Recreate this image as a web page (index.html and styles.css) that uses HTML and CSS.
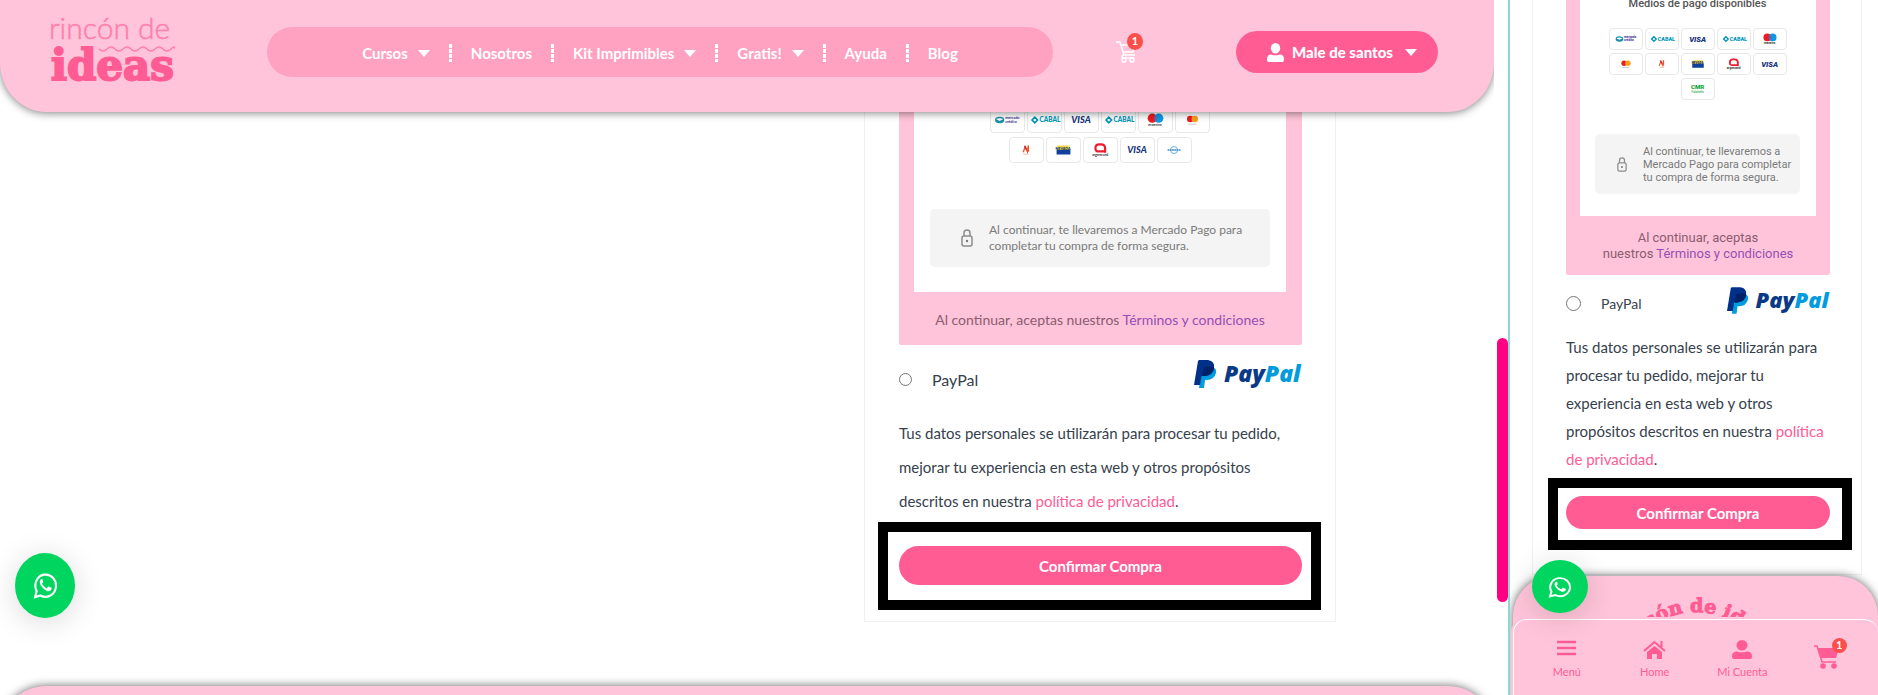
FILE: index.html
```html
<!DOCTYPE html>
<html lang="es">
<head>
    <meta charset="UTF-8">
    <meta name="viewport" content="width=device-width, initial-scale=1.0">
    <title>Rincón de Ideas - Finalizar compra</title>
    <link rel="stylesheet" href="styles.css">
</head>
<body>
    <!-- shared icons -->
    <svg class="sprite" aria-hidden="true">
        <symbol id="mercado" viewBox="0 0 35 26">
            <ellipse cx="9" cy="13" rx="5" ry="3.500" fill="#1a8fa8"/>
            <path d="M5 12q4-2 8 0l-4 2z" fill="#fff"/>
            <text x="15" y="12" class="tiny" fill="#3b2a91">mercado</text>
            <text x="15" y="16" class="tiny" fill="#3b2a91">crédito</text>
        </symbol>
        <symbol id="cabal" viewBox="0 0 35 26">
            <path d="M4 13l3-3 3 3-3 3z" fill="none" stroke="#0097b8" stroke-width="1.800"/>
            <text x="12" y="15.500" font-size="7" font-weight="900" fill="#0097b8">CABAL</text>
        </symbol>
        <symbol id="visa" viewBox="0 0 35 26">
            <text x="17" y="16.500" font-size="10" font-weight="900" font-style="italic" text-anchor="middle" fill="#17337c">VISA</text>
        </symbol>
        <symbol id="maestro" viewBox="0 0 35 26">
            <circle cx="14" cy="11" r="5" fill="#eb1c22"/>
            <circle cx="21" cy="11" r="5" fill="#0d9ae5"/>
            <path d="M17.500 7.500a5 5 0 0 1 0 7a5 5 0 0 1 0-7" fill="#7b5aa5"/>
            <text x="17" y="20" class="tiny" text-anchor="middle" fill="#333">maestro</text>
        </symbol>
        <symbol id="master" viewBox="0 0 35 26">
            <circle cx="15" cy="12" r="3.500" fill="#eb1c22"/>
            <circle cx="20" cy="12" r="3.500" fill="#f99f1b"/>
            <path d="M13 17.500h9" stroke="#999" stroke-width=".6"/>
        </symbol>
        <symbol id="naranja" viewBox="0 0 35 26">
            <path d="M14 15.500l2-6 2.500 5.500 1-7v7" fill="none" stroke="#f2542d" stroke-width="1.500"/>
            <path d="M15.500 8.500l2 4" stroke="#d2222d" stroke-width="1.500"/>
            <path d="M14 17.500h6" stroke="#f7a38d" stroke-width=".8"/>
        </symbol>
        <symbol id="nevada" viewBox="0 0 35 26">
            <path d="M11 8h13v5H10z" fill="#f5d742"/>
            <path d="M10 13h15v5H10z" fill="#10409b"/>
            <text x="17" y="13.500" font-size="4" font-weight="900" text-anchor="middle" fill="#10306e">NEVADA</text>
        </symbol>
        <symbol id="argen" viewBox="0 0 35 26">
            <path d="M22.500 16v-5q0-4-4.500-4h-2q-4 0-4 4t4 3.500h6.500" fill="none" stroke="#ee1c2e" stroke-width="2.400"/>
            <text x="17" y="20" class="tiny" text-anchor="middle" fill="#333">argencard</text>
        </symbol>
        <symbol id="diners" viewBox="0 0 35 26">
            <circle cx="17" cy="13" r="3.800" fill="none" stroke="#5aa6d6"/>
            <path d="M10 13h14" stroke="#3c8ec9" stroke-width="1.800" stroke-dasharray="2 .4"/>
        </symbol>
        <symbol id="cmr" viewBox="0 0 35 26">
            <text x="17" y="13.500" font-size="8" font-weight="900" text-anchor="middle" fill="#13a538">CMR</text>
            <text x="17" y="18" font-size="4" text-anchor="middle" fill="#13a538">Falabella</text>
        </symbol>
        <symbol id="lock" viewBox="0 0 12 18">
            <rect x="1" y="7" width="10" height="10" rx="2" fill="none" stroke="#8c8c8c" stroke-width="1.500"/>
            <path d="M3 7V4a3 3 0 0 1 6 0v3" fill="none" stroke="#8c8c8c" stroke-width="1.500"/>
            <circle cx="6" cy="12" r="1.200" fill="#777"/>
        </symbol>
        <symbol id="user" viewBox="0 0 20 20">
            <ellipse cx="10" cy="5.500" rx="5.500" ry="5.500"/>
            <path d="M0 18v-1q0-5 5-5 5 2 10 0 5 0 5 5v1q0 2-2 2H2q-2 0-2-2z"/>
        </symbol>
        <symbol id="whatsapp" viewBox="0 0 24 24">
            <path d="M2 22.300l1.500-5.300A9.900 9.900 0 1 1 7.300 20.800z" fill="none" stroke="#fff" stroke-width="2"/>
            <path d="M8.600 6.300q-.8-.2-1.500.8-1.500 2.400.8 5.400 2.300 3.400 6 4.600 3 .6 3.900-2 .2-.9-.2-1.100l-2.300-1.100q-.5-.2-.8.2l-1 1.200q-.3.300-.7.100-2.700-1.200-4-3.700-.1-.3.100-.6l.8-1q.2-.3 0-.6L9.200 6.700q-.2-.4-.6-.4z" fill="#fff"/>
        </symbol>
        <symbol id="paypal" viewBox="0 0 108 28">
            <path d="M19 7q4 2 3 6-2 7-9 7h-2l-1 8H5l3-20z" fill="#009cde"/>
            <path d="M5 0h9q7 1 6 8-1 7-9 8H7.500L6 25H0L4 1z" fill="#003087"/>
            <path d="M10 7q8-1 10 0 0 8-9 9H8z" fill="#012169"/>
            <text x="30" y="22" class="paypal-text" fill="#0a3a86">Pay<tspan fill="#009cde">Pal</tspan></text>
        </symbol>
    </svg>

    <div class="panes">
        <section class="desktop">
            <header class="header">
                <a href="#" class="logo" aria-label="Rincón de ideas">
                    <svg width="126" height="84" viewBox="0 0 126 84">
                        <text x="0" y="29" class="logo-thin">rincón de</text>
                        <text x="2" y="70" class="logo-fat">ideas</text>
                        <path d="M50 39q4 4 8 0t8 0 8 0 8 0 8 0 8 0 8 0 8 0 8 0 4 0" fill="none" stroke="#ff7fab" stroke-width="1.500"/>
                    </svg>
                </a>
                <nav class="nav">
                    <a href="#" class="has-caret">Cursos</a>
                    <a href="#">Nosotros</a>
                    <a href="#" class="has-caret">Kit Imprimibles</a>
                    <a href="#" class="has-caret">Gratis!</a>
                    <a href="#">Ayuda</a>
                    <a href="#">Blog</a>
                </nav>
                <a href="#" class="cart" aria-label="Carrito">
                    <svg width="20" height="22" viewBox="0 0 20 22" fill="none" stroke="#fff" stroke-width="1.500">
                        <path d="M0 1h4l4 13h11M5 4h14l-2 7H7M8 14q-2 0-2 2 0 1 1 1h11"/>
                        <circle cx="8" cy="19" r="2"/>
                        <circle cx="16" cy="19" r="2"/>
                    </svg>
                    <span class="badge">1</span>
                </a>
                <button type="button" class="account">
                    <svg width="17" height="19" viewBox="0 0 20 20" preserveAspectRatio="none" fill="#fff"><use href="#user"/></svg>
                    <span class="has-caret">Male de santos</span>
                </button>
            </header>

            <main class="main">
                <div class="card">
                    <div class="pay-box">
                        <div class="pay-inner">
                            <div class="chips">
                                <svg class="chip"><use href="#mercado"/></svg>
                                <svg class="chip"><use href="#cabal"/></svg>
                                <svg class="chip"><use href="#visa"/></svg>
                                <svg class="chip"><use href="#cabal"/></svg>
                                <svg class="chip"><use href="#maestro"/></svg>
                                <svg class="chip"><use href="#master"/></svg>
                                <svg class="chip"><use href="#naranja"/></svg>
                                <svg class="chip"><use href="#nevada"/></svg>
                                <svg class="chip"><use href="#argen"/></svg>
                                <svg class="chip"><use href="#visa"/></svg>
                                <svg class="chip"><use href="#diners"/></svg>
                            </div>
                            <div class="notice">
                                <svg class="lock"><use href="#lock"/></svg>
                                <p>Al continuar, te llevaremos a Mercado Pago para<br>completar tu compra de forma segura.</p>
                            </div>
                        </div>
                        <p class="terms">Al continuar, aceptas nuestros <a href="#">Términos y condiciones</a></p>
                    </div>
                    <div class="paypal-row">
                        <input type="radio" id="paypalDesktop" name="payDesktop">
                        <label for="paypalDesktop">PayPal</label>
                        <svg class="paypal-logo"><use href="#paypal"/></svg>
                    </div>
                    <p class="privacy">Tus datos personales se utilizarán para procesar tu pedido, mejorar tu experiencia en esta web y otros propósitos descritos en nuestra <a href="#">política de privacidad</a>.</p>
                    <div class="frame">
                        <button type="submit" class="confirm">Confirmar Compra</button>
                    </div>
                </div>
            </main>
            <footer class="footer"></footer>
            <a href="#" class="whatsapp" aria-label="WhatsApp">
                <svg width="25" height="27" viewBox="0 0 24 24" preserveAspectRatio="none"><use href="#whatsapp"/></svg>
            </a>
        </section>

        <div class="scroll"><div class="thumb"></div></div>

        <section class="phone">
            <div class="card">
                <div class="pay-box">
                    <div class="pay-inner">
                        <h3>Medios de pago disponibles</h3>
                        <div class="chips">
                            <svg class="chip"><use href="#mercado"/></svg>
                            <svg class="chip"><use href="#cabal"/></svg>
                            <svg class="chip"><use href="#visa"/></svg>
                            <svg class="chip"><use href="#cabal"/></svg>
                            <svg class="chip"><use href="#maestro"/></svg>
                            <svg class="chip"><use href="#master"/></svg>
                            <svg class="chip"><use href="#naranja"/></svg>
                            <svg class="chip"><use href="#nevada"/></svg>
                            <svg class="chip"><use href="#argen"/></svg>
                            <svg class="chip"><use href="#visa"/></svg>
                            <svg class="chip"><use href="#cmr"/></svg>
                        </div>
                        <div class="notice">
                            <svg class="lock"><use href="#lock"/></svg>
                            <p>Al continuar, te llevaremos a Mercado Pago para completar tu compra de forma segura.</p>
                        </div>
                    </div>
                    <p class="terms">Al continuar, aceptas<br>nuestros <a href="#">Términos y condiciones</a></p>
                </div>
                <div class="paypal-row">
                    <input type="radio" id="paypalPhone" name="payPhone">
                    <label for="paypalPhone">PayPal</label>
                    <svg class="paypal-logo"><use href="#paypal"/></svg>
                </div>
                <p class="privacy">Tus datos personales se utilizarán para procesar tu pedido, mejorar tu experiencia en esta web y otros propósitos descritos en nuestra <a href="#">política de privacidad</a>.</p>
                <div class="frame">
                    <button type="submit" class="confirm">Confirmar Compra</button>
                </div>
            </div>
            <footer class="footer">
                <svg width="160" height="100" viewBox="0 0 160 100">
                    <path id="arc" d="M5 94A75 75 0 0 1 155 94" fill="none"/>
                    <text class="arc-text" text-anchor="middle"><textPath href="#arc" startOffset="50%">rincón de ideas</textPath></text>
                </svg>
            </footer>
            <nav class="tabs">
                <a href="#">
                    <svg width="19" height="19" viewBox="0 0 19 19" stroke="#ff5c94" stroke-width="2.500"><path d="M0 2h19M0 8h19M0 14h19"/></svg>
                    Menú
                </a>
                <a href="#">
                    <svg width="23" height="19" viewBox="0 0 23 19" fill="#ff5c94">
                        <path d="M11.500 6l7.500 6v7h-5v-5H9v5H4v-7z"/>
                        <path d="M1 11l10.500-9L22 11M18.500 1v6" fill="none" stroke="#ff5c94" stroke-width="2"/>
                    </svg>
                    Home
                </a>
                <a href="#">
                    <svg width="20" height="19" viewBox="0 0 20 20" preserveAspectRatio="none" fill="#ff5c94"><use href="#user"/></svg>
                    Mi Cuenta
                </a>
                <a href="#" aria-label="Carrito">
                    <span class="tab-cart">
                        <svg width="25" height="24" viewBox="0 0 25 24" fill="#ff5c94">
                            <path d="M4 3h21l-3 10H7z"/>
                            <path d="M0 1h3l5 16h14" fill="none" stroke="#ff5c94" stroke-width="1.500"/>
                            <circle cx="9" cy="21" r="2.800"/>
                            <circle cx="20" cy="21" r="2.800"/>
                        </svg>
                        <span class="badge">1</span>
                    </span>
                </a>
            </nav>
            <a href="#" class="whatsapp" aria-label="WhatsApp">
                <svg width="24" height="22" viewBox="0 0 24 24" preserveAspectRatio="none"><use href="#whatsapp"/></svg>
            </a>
        </section>
    </div>
</body>
</html>
```
FILE: styles.css
```css
*, *::before, *::after{
    box-sizing: border-box;
    margin: 0;
    padding: 0;
}

body{
    font-family: Lato, "Noto Sans", sans-serif;
    background: #fff;
    color: #36414d;
}

a{
    color: inherit;
    text-decoration: none;
}

button{
    border: 0;
    font-family: inherit;
    cursor: pointer;
}

svg{
    display: block;
    flex: none;
}

.sprite{
    display: none;
}

.tiny{
    font-size: 4px;
    font-weight: 700;
}

.paypal-text{
    font-family: "Open Sans", sans-serif;
    font-size: 23px;
    font-weight: 800;
    font-style: italic;
}

.panes{
    display: grid;
    grid-template-columns: minmax(0, 1fr) 14px 370px;
    height: 100vh;
    overflow: hidden;
}

/* desktop pane */
.desktop{
    position: relative;
    display: flex;
    flex-direction: column;
    overflow: hidden;
}

.header{
    position: absolute;
    top: 0;
    left: 0;
    right: 0;
    z-index: 2;
    display: flex;
    align-items: center;
    height: 112px;
    padding: 0 56px 8px 49px;
    background: #ffc4d9;
    border-radius: 0 0 46px 46px / 0 0 50px 50px;
    box-shadow: 0 1px 8px rgba(0, 0, 0, .5);
}

.logo{
    margin-right: 92px;
}

.logo-thin{
    font-size: 30px;
    font-weight: 300;
    fill: #ff7fab;
    stroke: #ff7fab;
    stroke-width: .5;
}

.logo-fat{
    font-family: "DejaVu Serif", serif;
    font-size: 42px;
    font-weight: 700;
    fill: #ff5c94;
    stroke: #ff5c94;
    stroke-width: 2;
}

.nav{
    flex: 1;
    display: flex;
    align-items: center;
    justify-content: center;
    gap: 19px;
    height: 50px;
    padding-top: 2px;
    border-radius: 25px;
    background: #ffa1c1;
    color: #fff;
    font-size: 15px;
    font-weight: 700;
    white-space: nowrap;
}

.nav a{
    display: flex;
    align-items: center;
}

.nav a + a::before{
    content: "";
    width: 3px;
    height: 18px;
    margin-right: 19px;
    background: repeating-linear-gradient(#fff 0 4px, transparent 4px 5px);
}

.has-caret::after{
    content: "";
    display: inline-block;
    margin-left: 10px;
    border: 6px solid transparent;
    border-top: 7px solid #fff;
    border-bottom: 0;
    vertical-align: middle;
}

.cart{
    position: relative;
    width: 27px;
    margin: 0 93px 0 63px;
}

.badge{
    position: absolute;
    top: -8px;
    right: 0;
    width: 16px;
    height: 17px;
    border-radius: 50%;
    background: #fb4f4b;
    color: #fff;
    font-size: 11px;
    font-weight: 700;
    line-height: 16px;
    text-align: center;
}

.account{
    display: flex;
    align-items: center;
    justify-content: center;
    gap: 8px;
    width: 202px;
    height: 42px;
    padding-left: 10px;
    border-radius: 21px;
    background: #ff5c94;
    color: #fff;
    font-size: 15px;
    font-weight: 900;
    white-space: nowrap;
}

.account .has-caret{
    display: flex;
    align-items: center;
}

.account .has-caret::after{
    margin-left: 12px;
}

.main{
    display: flex;
    justify-content: flex-end;
    padding: 90px 158px 64px 0;
}

.card{
    width: 472px;
    padding: 0 33px 11px 34px;
    border: 1px solid #eef1f5;
    border-width: 0 1px 1px;
}

.pay-box{
    padding: 0 16px 15px 15px;
    border-radius: 0 0 2px 2px;
    background: #ffc4d9;
}

.pay-inner{
    padding: 17px 16px 25px;
    background: #fff;
}

.chips{
    display: flex;
    flex-wrap: wrap;
    justify-content: center;
    gap: 4px 2px;
    padding: 0 56px;
}

.chip{
    width: 35px;
    height: 26px;
    border: 1px solid #e8e8e8;
    border-radius: 4px;
}

.notice{
    display: flex;
    align-items: center;
    gap: 16px;
    margin-top: 46px;
    padding: 13px 16px 13px 31px;
    border-radius: 5px;
    background: #f4f4f4;
    color: #7a7a7a;
    font-size: 12px;
    line-height: 16px;
}

.lock{
    width: 12px;
    height: 18px;
}

.terms{
    padding-top: 18px;
    color: #8a5c70;
    font-size: 14px;
    line-height: 20px;
    text-align: center;
}

.terms a{
    color: #954fb5;
}

.paypal-row{
    display: flex;
    align-items: center;
    height: 38px;
    margin-top: 15px;
    font-size: 16px;
}

.paypal-row input{
    appearance: none;
    width: 13px;
    height: 13px;
    margin-right: 20px;
    border: 1px solid #767676;
    border-radius: 50%;
}

.paypal-logo{
    align-self: flex-start;
    width: 108px;
    height: 28px;
    margin-left: auto;
}

.privacy{
    margin-top: 18px;
    padding-bottom: 1px;
    font-size: 15px;
    line-height: 34px;
}

.privacy a{
    color: #ff5c94;
}

.frame{
    margin: 3px -19px 0 -21px;
    padding: 14px 9px 15px 11px;
    border: 10px solid #000;
    background: #fff;
}

.confirm{
    display: block;
    width: 100%;
    height: 39px;
    border-radius: 20px;
    background: #ff5c94;
    color: #fff;
    font-size: 15px;
    font-weight: 700;
}

.footer{
    flex: 1;
    min-height: 60px;
    border-radius: 46px 46px 0 0;
    background: #ffc4d9;
    box-shadow: 0 0 10px rgba(0, 0, 0, .6);
}

.whatsapp{
    position: absolute;
    left: 15px;
    bottom: 77px;
    z-index: 3;
    display: grid;
    place-content: center;
    width: 60px;
    height: 65px;
    border-radius: 50%;
    background: #00d65f;
    box-shadow: 0 4px 30px rgba(0, 0, 0, .15);
}

/* scrollbar between the panes */
.scroll{
    padding: 338px 0 0 3px;
}

.thumb{
    height: 264px;
    border-radius: 6px;
    background: #ff0084;
}

/* phone pane */
.phone{
    position: relative;
    overflow: hidden;
    padding: 0 16px 0 22px;
    border-left: 2px solid #8ad8cf;
}

.phone .card{
    width: auto;
    padding: 0 31px 24px 33px;
}

.phone .pay-box{
    padding: 0 14px 13px;
    font-family: Roboto, sans-serif;
}

.phone .pay-inner{
    padding: 0 16px 22px 15px;
}

.phone h3{
    height: 11px;
    margin-bottom: 17px;
    font-size: 11px;
    font-weight: 500;
    line-height: 8px;
    text-align: center;
    color: #555;
}

.phone .chips{
    gap: 3px 2px;
    padding: 0 12px;
}

.phone .chip{
    width: 34px;
    height: 22px;
}

.phone .notice{
    margin-top: 34px;
    padding: 11px 4px 10px 22px;
    font-size: 11px;
    line-height: 13px;
}

.phone .lock{
    width: 10px;
    height: 15px;
}

.phone .terms{
    padding: 14px 0 0;
    font-size: 13px;
    line-height: 16px;
}

.phone .paypal-row{
    height: 32px;
    margin-top: 12px;
    font-size: 14px;
}

.phone .paypal-row input{
    width: 15px;
    height: 15px;
}

.phone .paypal-logo{
    width: 103px;
    height: 27px;
}

.phone .privacy{
    margin-top: 14px;
    padding: 0 0 2px;
    font-size: 15px;
    line-height: 28px;
}

.phone .frame{
    margin: 3px -22px 0 -18px;
    padding: 8px 12px 11px 8px;
}

.phone .confirm{
    height: 33px;
}

.phone .footer{
    display: flex;
    justify-content: center;
    height: 140px;
    margin: 1px -16px 0 -19px;
    padding-top: 17px;
    border-radius: 40px 40px 0 0;
}

.arc-text{
    font-family: "DejaVu Serif", serif;
    font-size: 19px;
    font-weight: 700;
    fill: #ff5c94;
    stroke: #ff5c94;
}

.tabs{
    position: absolute;
    left: 3px;
    right: 0;
    bottom: 0;
    display: flex;
    height: 76px;
    padding: 17px 4px 0 9px;
    border: 1px solid #fff;
    border-width: 1px 0 0 1px;
    border-radius: 14px 14px 0 0;
    background: #ffc4d9;
    box-shadow: 0 0 0 2px #ffc4d9;
    color: #ff5c94;
    font-size: 11px;
    line-height: 14px;
}

.tabs a{
    flex: 1;
    display: flex;
    flex-direction: column;
    align-items: center;
    gap: 6px;
    padding-top: 3px;
}

.tab-cart{
    position: relative;
    width: 33px;
    padding-top: 5px;
}

.tabs .badge{
    top: -2px;
    width: 15px;
    height: 15px;
    line-height: 14px;
}

.phone .whatsapp{
    left: 22px;
    bottom: 82px;
    width: 56px;
    height: 53px;
}
```
